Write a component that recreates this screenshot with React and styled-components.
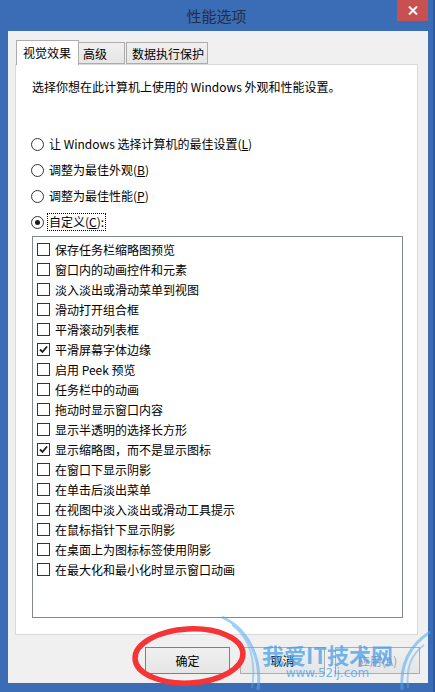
import React from "react";
import styled, { createGlobalStyle } from "styled-components";

const Global = createGlobalStyle`
  html, body { margin: 0; padding: 0; background: #3b6cb6; }
  body { font-family: "Noto Sans CJK SC", "Noto Sans", sans-serif; font-size: 12px; color: #000; }
  * { box-sizing: border-box; }
`;

const Window = styled.div`
  position: relative;
  width: 435px;
  height: 692px;
  background: #3b6cb6;
  border-right: 2px solid #2d5ba3;
  display: flex;
  flex-direction: column;
  overflow: hidden;
`;

const TitleBar = styled.div`
  height: 31px;
  display: grid;
  grid-template-columns: 1fr auto 1fr;
`;

const Title = styled.div`
  grid-column: 2;
  align-self: center;
  font-size: 15px;
  color: #262e3a;
  padding-bottom: 1px;
`;

const CloseButton = styled.div`
  grid-column: 3;
  justify-self: end;
  width: 31px;
  height: 21px;
  margin-right: 5px;
  background: #c75050;
  display: flex;
  align-items: center;
  justify-content: center;
`;

const Client = styled.div`
  flex: 1;
  margin: 0 5px 9px 8px;
  background: #f0f0f0;
  display: flex;
  flex-direction: column;
  padding: 9px 10px 0 7px;
`;

const TabRow = styled.div`
  display: flex;
  align-items: flex-end;
  height: 24px;
  padding-left: 1px;
  position: relative;
  z-index: 1;
`;

const Tab = styled.div`
  height: ${(p) => (p.$active ? "25px" : "22px")};
  margin-bottom: ${(p) => (p.$active ? "-1px" : "0")};
  padding: 0 ${(p) => p.$pad}px;
  width: ${(p) => p.$w}px;
  border: 1px solid #acacac;
  border-bottom: ${(p) => (p.$active ? "none" : "1px solid #acacac")};
  margin-left: ${(p) => (p.$first ? "0" : "-1px")};
  background: ${(p) => (p.$active ? "#ffffff" : "linear-gradient(#f0f0f0, #e5e5e5)")};
  display: flex;
  align-items: ${(p) => (p.$active ? "flex-start" : "center")};
  padding-top: ${(p) => (p.$active ? "3px" : "0")};
  font-size: 12px;
  white-space: nowrap;
`;

const Panel = styled.div`
  height: 571px;
  background: #fff;
  border: 1px solid #d9d9d9;
  padding: 14px 14px 16px 15px;
  display: flex;
  flex-direction: column;
`;

const Description = styled.div`
  line-height: 16px;
  padding-left: 1px;
`;

const RadioGroup = styled.div`
  display: flex;
  flex-direction: column;
  margin-top: 36px;
`;

const RadioRow = styled.div`
  display: flex;
  align-items: center;
  height: 26px;
  gap: 3px;
`;

const RadioCircle = styled.span`
  width: 13px;
  height: 13px;
  border-radius: 50%;
  border: 1px solid #333;
  background: #fff;
  display: flex;
  align-items: center;
  justify-content: center;
  flex-shrink: 0;
  &::after {
    content: "";
    width: 5px;
    height: 5px;
    border-radius: 50%;
    background: ${(p) => (p.$on ? "#1a1a1a" : "transparent")};
  }
`;

const RadioLabel = styled.span`
  padding: 0 1px;
  line-height: 16px;
  border: 1px dotted ${(p) => (p.$focus ? "#000" : "transparent")};
`;

const ListBox = styled.div`
  flex: 1;
  margin-top: 1px;
  margin-left: 1px;
  border: 1px solid #828790;
  background: #fff;
  padding: 2px 4px;
  display: flex;
  flex-direction: column;
`;

const CheckRow = styled.div`
  display: flex;
  align-items: center;
  height: 20px;
  gap: 5px;
`;

const CheckBox = styled.span`
  width: 13px;
  height: 13px;
  border: 1px solid #333;
  background: #fff;
  display: flex;
  align-items: center;
  justify-content: center;
  flex-shrink: 0;
`;

const ButtonRow = styled.div`
  display: flex;
  justify-content: flex-end;
  gap: 10px;
  margin-top: 12px;
  margin-right: -2px;
`;

const Button = styled.div`
  width: 85px;
  height: 27px;
  border: 1px solid ${(p) => (p.$default ? "#3c8fe6" : "#adadad")};
  background: linear-gradient(#f0f0f0, #e5e5e5);
  color: ${(p) => (p.$disabled ? "#a0a0a0" : "#000")};
  display: flex;
  align-items: center;
  justify-content: center;
  font-size: 12px;
`;

const Overlay = styled.svg`
  position: absolute;
  left: 0;
  top: 0;
  pointer-events: none;
`;

const Watermark = styled.div`
  position: absolute;
  left: 262px;
  top: 640px;
  display: flex;
  flex-direction: column;
  align-items: center;
  pointer-events: none;
  color: rgba(70, 160, 235, 0.75);
`;

const WmTitle = styled.div`
  font-size: 22px;
  font-weight: 700;
  line-height: 28px;
`;

const WmUrl = styled.div`
  font-family: "DejaVu Sans", sans-serif;
  font-size: 12px;
  line-height: 14px;
  margin-top: -2px;
`;

const items = [
  ["保存任务栏缩略图预览", false],
  ["窗口内的动画控件和元素", false],
  ["淡入淡出或滑动菜单到视图", false],
  ["滑动打开组合框", false],
  ["平滑滚动列表框", false],
  ["平滑屏幕字体边缘", true],
  ["启用 Peek 预览", false],
  ["任务栏中的动画", false],
  ["拖动时显示窗口内容", false],
  ["显示半透明的选择长方形", false],
  ["显示缩略图，而不是显示图标", true],
  ["在窗口下显示阴影", false],
  ["在单击后淡出菜单", false],
  ["在视图中淡入淡出或滑动工具提示", false],
  ["在鼠标指针下显示阴影", false],
  ["在桌面上为图标标签使用阴影", false],
  ["在最大化和最小化时显示窗口动画", false],
];

const Check = () => (
  <svg width="9" height="9" viewBox="0 0 9 9">
    <path d="M1 4.5 L3.5 7 L8 1.5" fill="none" stroke="#1a1a1a" strokeWidth="1.8" />
  </svg>
);

export default function App() {
  return (
    <>
      <Global />
      <Window>
        <TitleBar>
          <Title>性能选项</Title>
          <CloseButton>
            <svg width="10" height="9" viewBox="0 0 10 9">
              <path d="M1 0.5 L9 8.5 M9 0.5 L1 8.5" stroke="#fff" strokeWidth="2" />
            </svg>
          </CloseButton>
        </TitleBar>
        <Client>
          <TabRow>
            <Tab $active $first $w={63} $pad={6}>视觉效果</Tab>
            <Tab $w={47} $pad={4}>高级</Tab>
            <Tab $w={82} $pad={5} style={{ marginLeft: 1 }}>数据执行保护</Tab>
          </TabRow>
          <Panel>
            <Description>选择你想在此计算机上使用的 Windows 外观和性能设置。</Description>
            <RadioGroup>
              <RadioRow>
                <RadioCircle />
                <RadioLabel>让 Windows 选择计算机的最佳设置(<u>L</u>)</RadioLabel>
              </RadioRow>
              <RadioRow>
                <RadioCircle />
                <RadioLabel>调整为最佳外观(<u>B</u>)</RadioLabel>
              </RadioRow>
              <RadioRow>
                <RadioCircle />
                <RadioLabel>调整为最佳性能(<u>P</u>)</RadioLabel>
              </RadioRow>
              <RadioRow>
                <RadioCircle $on />
                <RadioLabel $focus>自定义(<u>C</u>):</RadioLabel>
              </RadioRow>
            </RadioGroup>
            <ListBox>
              {items.map(([label, on]) => (
                <CheckRow key={label}>
                  <CheckBox>{on && <Check />}</CheckBox>
                  <span>{label}</span>
                </CheckRow>
              ))}
            </ListBox>
          </Panel>
          <ButtonRow>
            <Button $default>确定</Button>
            <Button>取消</Button>
            <Button $disabled>应用(A)</Button>
          </ButtonRow>
        </Client>
        <Overlay width="435" height="692">
          <ellipse cx="189" cy="656" rx="54" ry="27" fill="none" stroke="#f53535" strokeWidth="5.5" transform="rotate(-3 189 656)" />
          <path d="M222 617 C250 630 262 660 258 690" fill="none" stroke="rgba(80,170,240,0.55)" strokeWidth="3" />
          <path d="M232 625 C252 640 256 662 252 688" fill="none" stroke="rgba(80,170,240,0.45)" strokeWidth="2" />
          <path d="M430 632 C410 645 400 665 402 690" fill="none" stroke="rgba(80,170,240,0.55)" strokeWidth="3" />
          <path d="M424 645 C410 655 406 670 408 688" fill="none" stroke="rgba(80,170,240,0.45)" strokeWidth="2" />
        </Overlay>
        <Watermark>
          <WmTitle>我爱IT技术网</WmTitle>
          <WmUrl>www.52ij.com</WmUrl>
        </Watermark>
      </Window>
    </>
  );
}
